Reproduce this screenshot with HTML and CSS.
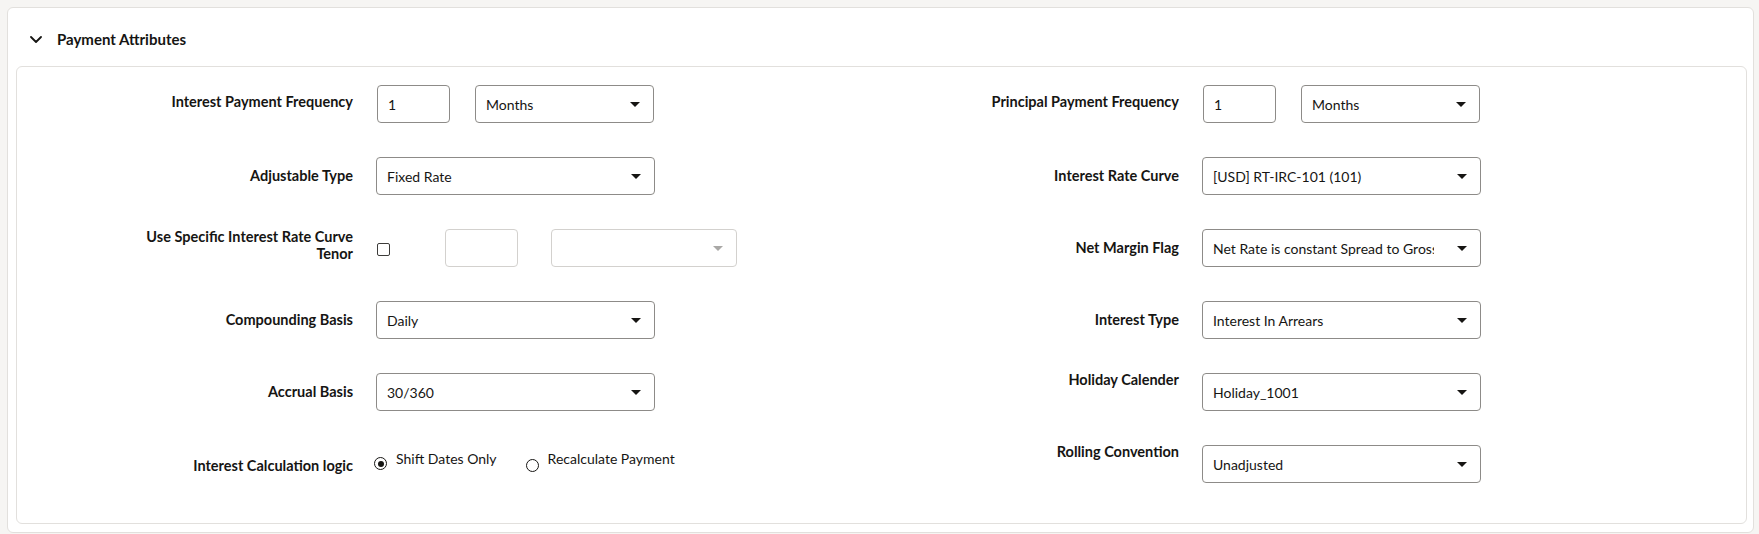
FILE: index.html
```html
<!DOCTYPE html>
<html lang="en">
<head>
<meta charset="utf-8">
<title>Payment Attributes</title>
<link rel="stylesheet" href="styles.css">
</head>
<body>
<section class="panel">
  <header class="panel-head">
    <svg class="chev" width="12" height="7" viewBox="0 0 12 7"><path d="M1 1 L6 6 L11 1" fill="none" stroke="#161513" stroke-width="1.8" stroke-linecap="round" stroke-linejoin="round"/></svg>
    <span class="panel-title">Payment Attributes</span>
  </header>
  <div class="panel-body">
    <div class="form-grid">
      <!-- row 1 -->
      <div class="frow">
        <label class="lbl lbl-up">Interest Payment Frequency</label>
        <div class="fields">
          <div class="box num"><span class="val">1</span></div>
          <div class="box sel sel-sm"><span class="val">Months</span><span class="arr"><svg width="10" height="5" viewBox="0 0 10 5"><polygon points="0,0 10,0 5,5" fill="#161513"/></svg></span></div>
        </div>
      </div>
      <div class="frow">
        <label class="lbl lbl-up">Principal Payment Frequency</label>
        <div class="fields">
          <div class="box num"><span class="val">1</span></div>
          <div class="box sel sel-sm"><span class="val">Months</span><span class="arr"><svg width="10" height="5" viewBox="0 0 10 5"><polygon points="0,0 10,0 5,5" fill="#161513"/></svg></span></div>
        </div>
      </div>
      <!-- row 2 -->
      <div class="frow">
        <label class="lbl">Adjustable Type</label>
        <div class="fields">
          <div class="box sel"><span class="val">Fixed Rate</span><span class="arr"><svg width="10" height="5" viewBox="0 0 10 5"><polygon points="0,0 10,0 5,5" fill="#161513"/></svg></span></div>
        </div>
      </div>
      <div class="frow">
        <label class="lbl">Interest Rate Curve</label>
        <div class="fields">
          <div class="box sel"><span class="val">[USD] RT-IRC-101 (101)</span><span class="arr"><svg width="10" height="5" viewBox="0 0 10 5"><polygon points="0,0 10,0 5,5" fill="#161513"/></svg></span></div>
        </div>
      </div>
      <!-- row 3 -->
      <div class="frow">
        <label class="lbl lbl-two">Use Specific Interest Rate Curve Tenor</label>
        <div class="fields">
          <span class="check"></span>
          <div class="box num dis"></div>
          <div class="box sel sel-dis dis"><span class="val"></span><span class="arr"><svg width="10" height="5" viewBox="0 0 10 5"><polygon points="0,0 10,0 5,5" fill="#a9a8a6"/></svg></span></div>
        </div>
      </div>
      <div class="frow">
        <label class="lbl">Net Margin Flag</label>
        <div class="fields">
          <div class="box sel"><span class="val val-clip">Net Rate is constant Spread to Gross Rate</span><span class="arr"><svg width="10" height="5" viewBox="0 0 10 5"><polygon points="0,0 10,0 5,5" fill="#161513"/></svg></span></div>
        </div>
      </div>
      <!-- row 4 -->
      <div class="frow">
        <label class="lbl">Compounding Basis</label>
        <div class="fields">
          <div class="box sel"><span class="val">Daily</span><span class="arr"><svg width="10" height="5" viewBox="0 0 10 5"><polygon points="0,0 10,0 5,5" fill="#161513"/></svg></span></div>
        </div>
      </div>
      <div class="frow">
        <label class="lbl">Interest Type</label>
        <div class="fields">
          <div class="box sel"><span class="val">Interest In Arrears</span><span class="arr"><svg width="10" height="5" viewBox="0 0 10 5"><polygon points="0,0 10,0 5,5" fill="#161513"/></svg></span></div>
        </div>
      </div>
      <!-- row 5 -->
      <div class="frow">
        <label class="lbl">Accrual Basis</label>
        <div class="fields">
          <div class="box sel"><span class="val">30/360</span><span class="arr"><svg width="10" height="5" viewBox="0 0 10 5"><polygon points="0,0 10,0 5,5" fill="#161513"/></svg></span></div>
        </div>
      </div>
      <div class="frow">
        <label class="lbl lbl-top">Holiday Calender</label>
        <div class="fields">
          <div class="box sel"><span class="val">Holiday_1001</span><span class="arr"><svg width="10" height="5" viewBox="0 0 10 5"><polygon points="0,0 10,0 5,5" fill="#161513"/></svg></span></div>
        </div>
      </div>
      <!-- row 6 -->
      <div class="frow">
        <label class="lbl lbl-down">Interest Calculation logic</label>
        <div class="fields radios">
          <span class="radio-item"><span class="radio on"></span><span class="rtext">Shift Dates Only</span></span>
          <span class="radio-item"><span class="radio low"></span><span class="rtext">Recalculate Payment</span></span>
        </div>
      </div>
      <div class="frow">
        <label class="lbl lbl-top">Rolling Convention</label>
        <div class="fields">
          <div class="box sel"><span class="val">Unadjusted</span><span class="arr"><svg width="10" height="5" viewBox="0 0 10 5"><polygon points="0,0 10,0 5,5" fill="#161513"/></svg></span></div>
        </div>
      </div>
    </div>
  </div>
</section>
</body>
</html>
```
FILE: styles.css
```css
* { box-sizing: border-box; }
html, body { margin: 0; padding: 0; }
body {
  background: #f6f5f3;
  font-family: "Lato", "Liberation Sans", Arial, sans-serif;
  font-size: 14px;
  color: #161513;
  padding: 7px 5px 0 7px;
}
.panel {
  width: 1747px;
  background: #ffffff;
  border: 1px solid #e2e0dd;
  border-radius: 6px;
  padding: 0 6px 8px 8px;
}
.panel-head {
  height: 58px;
  display: flex;
  align-items: center;
  padding-top: 4px;
  padding-left: 14px;
}
.chev { display: block; }
.panel-title {
  margin-left: 15px;
  font-weight: 700;
  font-size: 15px;
}
.panel-body {
  border: 1px solid #e2e0dd;
  border-radius: 6px;
  padding: 18px 0 40px 0;
}
.form-grid {
  display: grid;
  grid-template-columns: 826px 1fr;
  grid-auto-rows: 38px;
  row-gap: 34px;
}
.frow {
  display: flex;
  align-items: center;
}
.lbl {
  width: 336px;
  flex: none;
  padding-left: 114px;
  text-align: right;
  font-weight: 700;
  font-size: 14.5px;
  line-height: 20px;
  margin-right: 23px;
}
.lbl-up { padding-bottom: 5px; }
.lbl-two { line-height: 17px; padding-bottom: 7px; }
.lbl-top { align-self: flex-start; margin-top: -3px; }
.lbl-down { padding-top: 3px; }
.fields {
  display: flex;
  align-items: center;
  height: 38px;
}
.box {
  height: 38px;
  border: 1px solid #8d8b88;
  border-radius: 4px;
  display: flex;
  align-items: center;
  background: #fff;
}
.val {
  padding-left: 10px;
  white-space: nowrap;
  overflow: hidden;
  flex: 1;
  min-width: 0;
}
.val-clip { margin-right: 9px; }
.num { width: 73px; margin-left: 1px; }
.sel { width: 279px; }
.sel-sm { width: 179px; margin-left: 25px; }
.arr {
  width: 37px;
  flex: none;
  display: flex;
  justify-content: center;
  align-items: center;
}
.arr svg { display: block; }
.dis { border-color: #d3d1ce; }
.check {
  width: 13px;
  height: 13px;
  border: 1.5px solid #3d3c3a;
  border-radius: 2px;
  margin-left: 1px;
  margin-top: 2px;
}
.check + .num { margin-left: 55px; }
.sel-dis { width: 186px; margin-left: 33px; }
.radios {
  align-items: flex-start;
  height: 38px;
  padding-top: 4px;
  margin-left: -2px;
}
.radio-item {
  display: flex;
  align-items: flex-start;
}
.radio-item + .radio-item { margin-left: 29px; }
.radio {
  width: 13px;
  height: 13px;
  border: 1.5px solid #161513;
  border-radius: 50%;
  margin-top: 8px;
  display: flex;
  align-items: center;
  justify-content: center;
  flex: none;
}
.radio.low { margin-top: 10px; }
.radio.on::after {
  content: "";
  width: 6px;
  height: 6px;
  border-radius: 50%;
  background: #161513;
}
.rtext {
  margin-left: 9px;
  line-height: 20px;
}
```
